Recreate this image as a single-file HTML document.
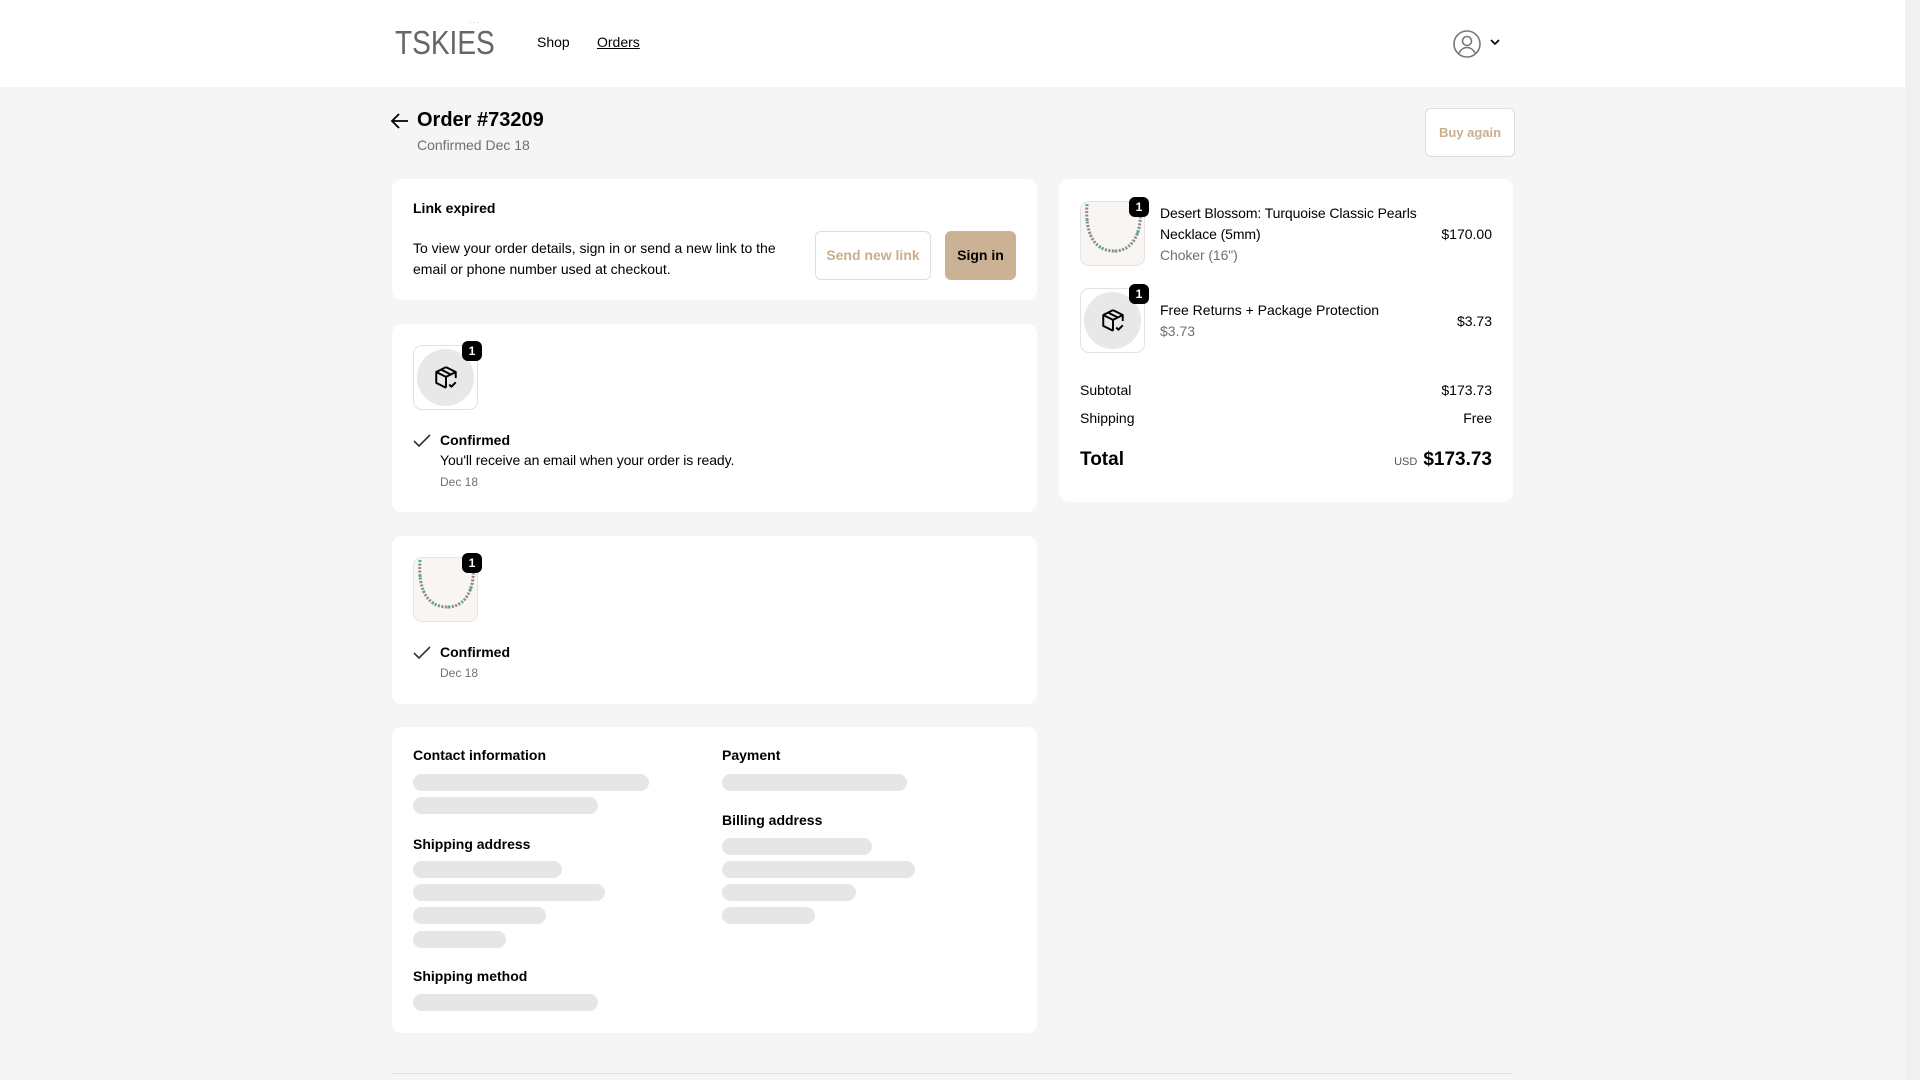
<!DOCTYPE html>
<html><head><meta charset="utf-8"><style>
*{box-sizing:border-box;margin:0;padding:0}
body{width:1920px;height:1080px;background:#f5f5f5;font-family:"Liberation Sans",Arial,sans-serif;color:#000;position:relative;overflow:hidden;font-size:14px}
.a{position:absolute;white-space:nowrap}
.hdr{position:absolute;left:0;top:0;width:1905px;height:87px;background:#fff}
.sb{position:absolute;left:1905px;top:0;width:15px;height:1080px;background:#f0f0f0}
.card{position:absolute;background:#fff;border-radius:10px}
.sk{position:absolute;height:17px;border-radius:9px;background:#e6e6e6}
.b{font-weight:bold}
.g{color:#707070}
.thumb{position:absolute;width:65px;height:65px;border-radius:9px;border:1px solid #e3e3e3;background:#fff;overflow:hidden}
.badge{position:absolute;width:20px;height:20px;border-radius:6px;background:#000;color:#fff;font-size:12px;font-weight:bold;text-align:center;line-height:20px}
.pk{position:absolute;left:3px;top:3px;width:57px;height:57px;border-radius:50%;background:#e8e8e8}
</style></head><body>
<div class="hdr"></div><div class="sb"></div>
<div class="a" style="left:395px;top:24px;font-size:33px;letter-spacing:0px;color:#666;transform:scaleX(0.85);transform-origin:left">TSKIES</div>
<div class="a" style="left:469px;top:18px;font-size:8px;color:#6cc;letter-spacing:1px">···</div>
<div class="a" style="left:537px;top:34px;font-size:14px">Shop</div>
<div class="a" style="left:597px;top:34px;font-size:14px;text-decoration:underline">Orders</div>
<svg class="a" style="left:1452px;top:29px" width="30" height="30" viewBox="0 0 30 30" fill="none" stroke="#777" stroke-width="1.6"><circle cx="15" cy="15" r="13"/><circle cx="15" cy="12" r="4.5"/><path d="M7 24c2-4 5-5.5 8-5.5s6 1.5 8 5.5"/></svg>
<svg class="a" style="left:1490px;top:38px" width="10" height="8" viewBox="0 0 10 8" fill="none" stroke="#000" stroke-width="1.6"><path d="M1 2l4 4 4-4"/></svg>

<svg class="a" style="left:390px;top:112px" width="20" height="18" viewBox="0 0 20 18" fill="none" stroke="#000" stroke-width="1.8"><path d="M18 9H3M9 2L2 9l7 7"/></svg>
<div class="a b" style="left:417px;top:109px;font-size:20px">Order #73209</div>
<div class="a g" style="left:417px;top:137px;font-size:14px">Confirmed Dec 18</div>
<div class="a" style="left:1425px;top:108px;width:90px;height:49px;border:1px solid #ddd;border-radius:6px;background:#fff;color:#c9ae8f;font-weight:bold;font-size:13px;text-align:center;line-height:47px">Buy again</div>

<div class="card" style="left:392px;top:179px;width:645px;height:121px"></div>
<div class="a b" style="left:413px;top:200px">Link expired</div>
<div class="a" style="left:413px;top:238px;line-height:21px">To view your order details, sign in or send a new link to the<br>email or phone number used at checkout.</div>
<div class="a" style="left:815px;top:231px;width:116px;height:49px;border:1px solid #ddd;border-radius:6px;color:#c9ae8f;font-weight:bold;font-size:14px;text-align:center;line-height:47px">Send new link</div>
<div class="a" style="left:945px;top:231px;width:71px;height:49px;border-radius:6px;background:#ccb294;font-weight:bold;font-size:14px;text-align:center;line-height:49px">Sign in</div>

<svg width="0" height="0" style="position:absolute"><defs>
<symbol id="box" viewBox="0 0 24 24"><g fill="none" stroke="#000" stroke-width="1.8" stroke-linejoin="round"><path d="M12 2L3 6.5v10L12 21"/><path d="M12 2l9 4.5V12"/><path d="M3 6.5L12 11l9-4.5M12 11v10M7.5 4.3l9 4.5"/><path d="M15 18l2 2 4-4"/></g></symbol>
<symbol id="neck" viewBox="0 0 65 65"><rect width="65" height="65" fill="#f8f5f2"/><path d="M6 2C4 30 12 48 32 49S62 30 59 2" fill="none" stroke="#8a8a8a" stroke-width="3" stroke-dasharray="2 1.5"/><path d="M6 2C4 30 12 48 32 49S62 30 59 2" fill="none" stroke="#4bb" stroke-width="3" stroke-dasharray="1.5 14"/></symbol>
</defs></svg>

<div class="card" style="left:392px;top:324px;width:645px;height:188px"></div>
<div class="thumb" style="left:413px;top:345px"><div class="pk"></div><svg class="a" style="left:19px;top:19px" width="26" height="26"><use href="#box"/></svg></div>
<div class="badge" style="left:462px;top:341px">1</div>
<svg class="a" style="left:413px;top:433px" width="18" height="16" viewBox="0 0 18 16" fill="none" stroke="#333" stroke-width="1.6"><path d="M1 8l5 5L17 2"/></svg>
<div class="a b" style="left:440px;top:432px">Confirmed</div>
<div class="a" style="left:440px;top:452px;letter-spacing:-0.1px">You'll receive an email when your order is ready.</div>
<div class="a g" style="left:440px;top:475px;font-size:12px">Dec 18</div>

<div class="card" style="left:392px;top:536px;width:645px;height:168px"></div>
<div class="thumb" style="left:413px;top:557px"><svg width="65" height="65"><use href="#neck"/></svg></div>
<div class="badge" style="left:462px;top:553px">1</div>
<svg class="a" style="left:413px;top:645px" width="18" height="16" viewBox="0 0 18 16" fill="none" stroke="#333" stroke-width="1.6"><path d="M1 8l5 5L17 2"/></svg>
<div class="a b" style="left:440px;top:644px">Confirmed</div>
<div class="a g" style="left:440px;top:666px;font-size:12px">Dec 18</div>

<div class="card" style="left:392px;top:727px;width:645px;height:306px"></div>
<div class="a b" style="left:413px;top:747px">Contact information</div>
<div class="sk" style="left:413px;top:774px;width:236px"></div>
<div class="sk" style="left:413px;top:797px;width:185px"></div>
<div class="a b" style="left:413px;top:836px">Shipping address</div>
<div class="sk" style="left:413px;top:861px;width:149px"></div>
<div class="sk" style="left:413px;top:884px;width:192px"></div>
<div class="sk" style="left:413px;top:907px;width:133px"></div>
<div class="sk" style="left:413px;top:931px;width:93px"></div>
<div class="a b" style="left:413px;top:968px">Shipping method</div>
<div class="sk" style="left:413px;top:994px;width:185px"></div>
<div class="a b" style="left:722px;top:747px">Payment</div>
<div class="sk" style="left:722px;top:774px;width:185px"></div>
<div class="a b" style="left:722px;top:812px">Billing address</div>
<div class="sk" style="left:722px;top:838px;width:150px"></div>
<div class="sk" style="left:722px;top:861px;width:193px"></div>
<div class="sk" style="left:722px;top:884px;width:134px"></div>
<div class="sk" style="left:722px;top:907px;width:93px"></div>

<div class="card" style="left:1059px;top:179px;width:454px;height:323px"></div>
<div class="thumb" style="left:1080px;top:201px"><svg width="65" height="65"><use href="#neck"/></svg></div>
<div class="badge" style="left:1129px;top:197px">1</div>
<div class="a" style="left:1160px;top:203px;line-height:21px;letter-spacing:-0.1px">Desert Blossom: Turquoise Classic Pearls<br>Necklace (5mm)<br><span class="g">Choker (16")</span></div>
<div class="a" style="right:428px;top:226px">$170.00</div>
<div class="thumb" style="left:1080px;top:288px"><div class="pk"></div><svg class="a" style="left:19px;top:19px" width="26" height="26"><use href="#box"/></svg></div>
<div class="badge" style="left:1129px;top:284px">1</div>
<div class="a" style="left:1160px;top:300px;line-height:21px">Free Returns + Package Protection<br><span class="g">$3.73</span></div>
<div class="a" style="right:428px;top:313px">$3.73</div>
<div class="a" style="left:1080px;top:382px">Subtotal</div>
<div class="a" style="right:428px;top:382px">$173.73</div>
<div class="a" style="left:1080px;top:410px">Shipping</div>
<div class="a" style="right:428px;top:410px">Free</div>
<div class="a b" style="left:1080px;top:449px;font-size:19px">Total</div>
<div class="a" style="right:428px;top:449px;font-size:19px"><span style="font-size:11px;color:#555;font-weight:normal;margin-right:6px">USD</span><b>$173.73</b></div>

<div class="a" style="left:392px;top:1073px;width:1121px;height:1px;background:#ddd"></div>
</body></html>
